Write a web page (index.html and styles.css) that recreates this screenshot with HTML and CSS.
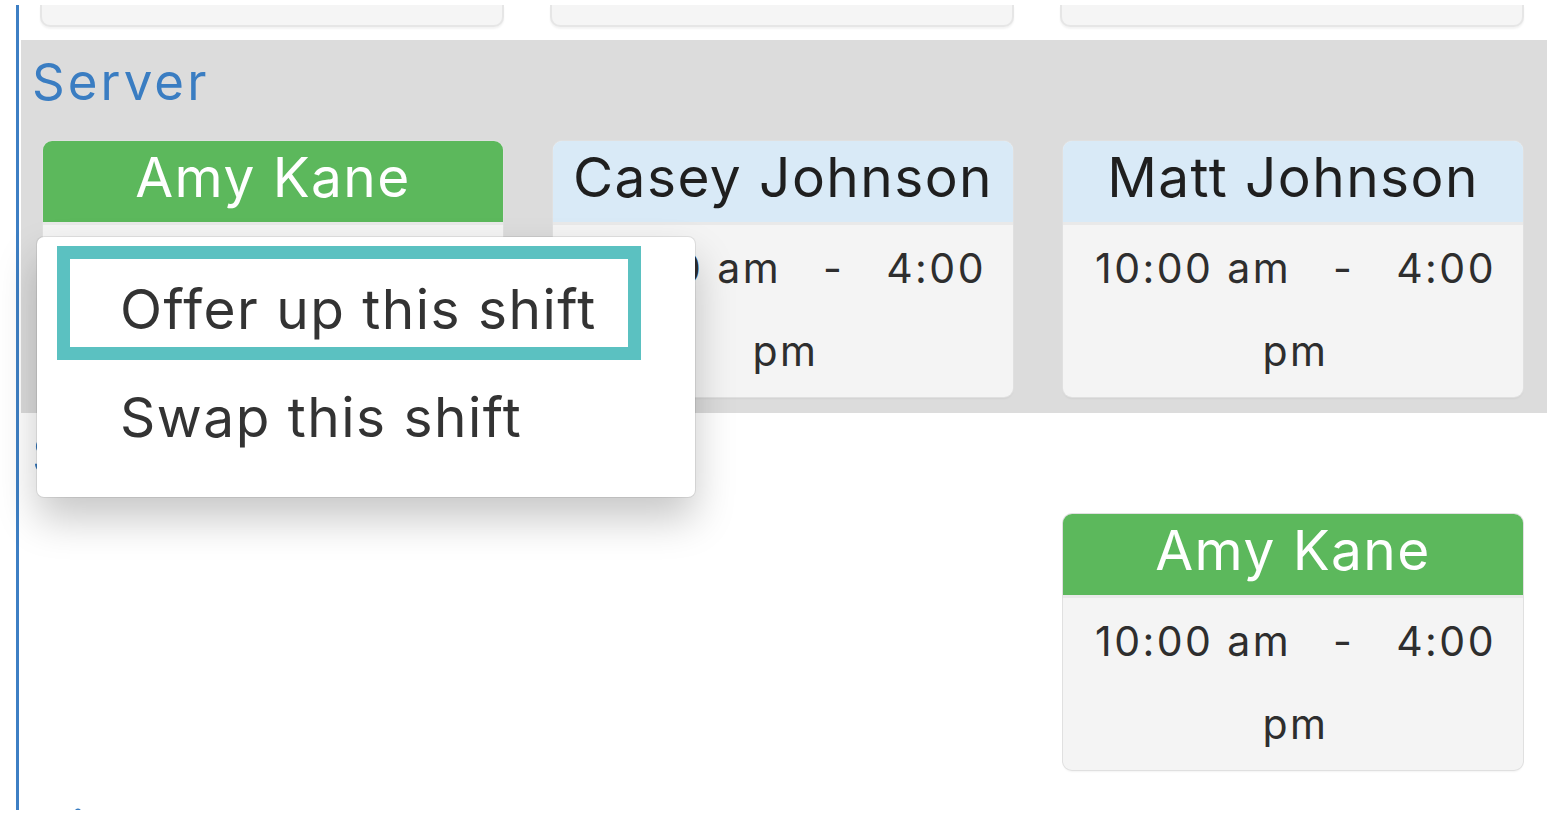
FILE: index.html
```html
<!DOCTYPE html>
<html lang="en">
<head>
<meta charset="utf-8">
<title>Schedule</title>
<link rel="stylesheet" href="styles.css">
</head>
<body>
<div class="schedule">
  <div class="prev-row">
    <div class="prev-card"></div>
    <div class="prev-card"></div>
    <div class="prev-card"></div>
  </div>

  <section class="role role--shaded">
    <h2 class="role__title">Server</h2>
    <div class="shifts">
      <div class="shift shift--mine">
        <div class="shift__name">Amy Kane</div>
        <div class="shift__time"><span class="shift__clock">10:00 am</span> - 4:00 pm</div>
      </div>
      <div class="shift">
        <div class="shift__name">Casey Johnson</div>
        <div class="shift__time"><span class="shift__clock">10:00 am</span> - 4:00 pm</div>
      </div>
      <div class="shift">
        <div class="shift__name">Matt Johnson</div>
        <div class="shift__time"><span class="shift__clock">10:00 am</span> - 4:00 pm</div>
      </div>
    </div>
  </section>

  <section class="role role--plain">
    <h2 class="role__title">Support</h2>
    <div class="shifts">
      <div class="shift-slot"></div>
      <div class="shift-slot"></div>
      <div class="shift shift--mine">
        <div class="shift__name">Amy Kane</div>
        <div class="shift__time"><span class="shift__clock">10:00 am</span> - 4:00 pm</div>
      </div>
    </div>
  </section>

  <section class="role role--plain">
    <h2 class="role__title">Dishwasher</h2>
  </section>
</div>

<ul class="menu">
  <li class="menu__item menu__item--focus">Offer up this shift</li>
  <li class="menu__item">Swap this shift</li>
</ul>
</body>
</html>
```

FILE: styles.css
```css
html, body {
  margin: 0;
  padding: 0;
  background: #ffffff;
}

body {
  font-family: Inter, "Noto Sans", sans-serif;
  color: #2b2b2b;
  height: 815px;
  overflow: hidden;
  position: relative;
}

.schedule {
  margin: 5px 0 0 16px;
  border-left: 3px solid #3d7fc4;
  height: 805px;
  overflow: hidden;
  padding: 0 2px;
  box-sizing: border-box;
}

/* bottoms of the cards in the row above */
.prev-row {
  display: grid;
  grid-template-columns: repeat(3, 464px);
  column-gap: 46px;
  padding-left: 19px;
  height: 35px;
}

.prev-card {
  height: 20px;
  background: #f5f5f5;
  border: 2px solid #e6e6e6;
  border-top: none;
  border-radius: 0 0 10px 10px;
  box-shadow: 0 2px 2px rgba(0, 0, 0, 0.05);
}

.role {
  padding: 11px 0 16px;
}

.role--shaded {
  background: #dcdcdc;
}

.role--plain {
  background: #ffffff;
  padding-bottom: 17px;
}

.role__title {
  margin: 0;
  padding-left: 11px;
  font-size: 51px;
  line-height: 62px;
  font-weight: 400;
  letter-spacing: 0.06em;
  color: #3a7dc2;
}

.shifts {
  display: grid;
  grid-template-columns: repeat(3, 460px);
  column-gap: 50px;
  padding-left: 22px;
  margin-top: 28px;
}

.shift {
  border-radius: 9px;
  overflow: hidden;
  background: #f4f4f4;
  box-shadow: 0 0 0 1px #e0e0e0, 0 2px 2px rgba(0, 0, 0, 0.05);
}

.shift__name {
  height: 72px;
  padding-bottom: 9px;
  line-height: 72px;
  font-size: 55px;
  letter-spacing: 0.026em;
  text-align: center;
  background: #d9eaf7;
  color: #1f1f1f;
  white-space: nowrap;
}

.shift--mine .shift__name {
  background: #5cb85c;
  color: #ffffff;
}

.shift__time {
  border-top: 3px solid #e9e9e9;
  padding: 2px 27px 4px 32px;
  font-size: 41px;
  line-height: 83px;
  letter-spacing: 0.06em;
  text-align: justify;
  text-align-last: center;
  color: #2e2e2e;
}

.shift__clock {
  display: inline-block;
}

/* context menu overlaying the schedule */
.menu {
  position: absolute;
  left: 37px;
  top: 237px;
  width: 658px;
  margin: 0;
  padding: 9px 54px 23px 20px;
  box-sizing: border-box;
  list-style: none;
  background: #ffffff;
  border-radius: 7px;
  box-shadow: 0 0 0 1px rgba(0, 0, 0, 0.08), 0 22px 40px rgba(0, 0, 0, 0.22);
}

.menu__item {
  border: 13px solid transparent;
  padding: 12px 0 0 50px;
  box-sizing: content-box;
  height: 76px;
  font-size: 55px;
  line-height: 76px;
  letter-spacing: 0.027em;
  color: #333333;
  white-space: nowrap;
}

.menu__item + .menu__item {
  padding-top: 6px;
  height: 82px;
}

.menu__item--focus {
  border-color: #5bc1c1;
}
```
